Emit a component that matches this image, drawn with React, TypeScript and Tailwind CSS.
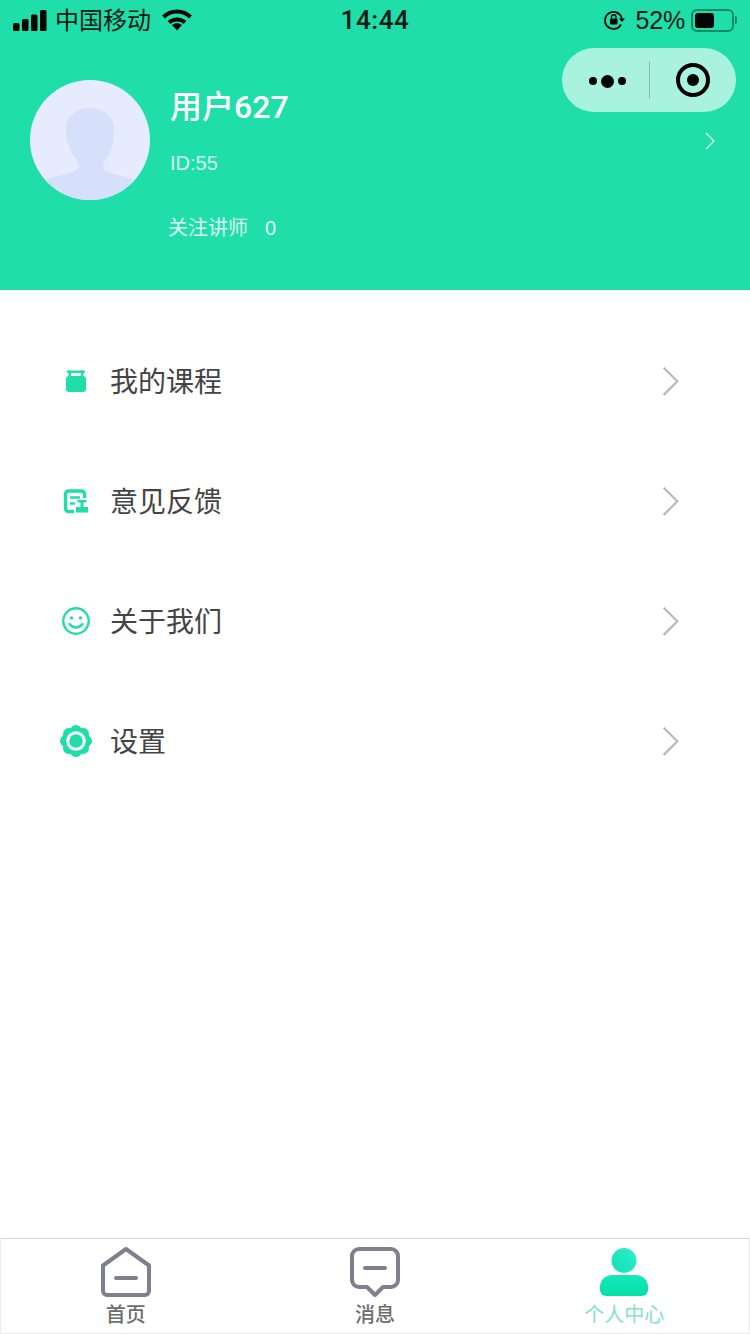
import type { ReactNode } from "react";

const GEAR_LOBES = [0, 45, 90, 135, 180, 225, 270, 315];

const MENU_ITEMS: { id: number; title: string; icon: ReactNode }[] = [
  {
    id: 1,
    title: "我的课程",
    icon: (
      <svg width="22" height="22" viewBox="0 0 22 22" fill="#1fdea9">
        <rect x="1" y="6" width="20" height="16" rx="3" />
        <rect x="2" y="0.500" width="18" height="2.600" rx="1" />
        <rect x="3.500" y="0.500" width="2.500" height="7" />
        <rect x="16" y="0.500" width="2.500" height="7" />
      </svg>
    ),
  },
  {
    id: 2,
    title: "意见反馈",
    icon: (
      <svg width="26" height="26" viewBox="0 0 26 26" fill="none" stroke="#1fdea9">
        <path d="M11 23.500H5A3.500 3.500 0 0 1 2.500 20V5.500A3.500 3.500 0 0 1 5 3h13a3.500 3.500 0 0 1 3.500 2.500V10" strokeWidth="3.400" />
        <path d="M7 9.500h10M7 15.500h5" strokeWidth="2.600" />
        <path d="M14.500 12h9v2.600h-3v4.400h4.500v5.500h-12V19h4.500v-4.400h-3z" fill="#1fdea9" stroke="none" />
      </svg>
    ),
  },
  {
    id: 3,
    title: "关于我们",
    icon: (
      <svg width="28" height="28" viewBox="0 0 28 28" fill="none" stroke="#1fdea9" strokeWidth="2.400">
        <circle cx="14" cy="14" r="12.700" />
        <circle cx="9.500" cy="11" r="1.800" fill="#1fdea9" stroke="none" />
        <circle cx="18.500" cy="11" r="1.800" fill="#1fdea9" stroke="none" />
        <path d="M7.500 17c3.500 4.600 9.500 4.600 13 0" strokeLinecap="round" />
      </svg>
    ),
  },
  {
    id: 4,
    title: "设置",
    icon: (
      <svg width="32" height="32" viewBox="0 0 32 32" fill="#1fdea9">
        <circle cx="16" cy="16" r="14" />
        {GEAR_LOBES.map((deg) => (
          <circle key={deg} cx="16" cy="5.500" r="5.500" transform={`rotate(${deg} 16 16)`} />
        ))}
        <circle cx="16" cy="16" r="9.800" fill="#fff" />
        <circle cx="16" cy="16" r="6.800" />
      </svg>
    ),
  },
];

const Chevron = ({ size, color, stroke }: { size: number; color: string; stroke: number }) => (
  <svg width={size} height={size * 1.8} viewBox="0 0 10 18" fill="none">
    <path d="M1 1l8 8-8 8" stroke={color} strokeWidth={stroke} />
  </svg>
);

const StatusBar = () => (
  <div className="flex h-10 items-center px-[13px] text-[#0a1a14]">
    <div className="flex flex-1 items-center">
      <svg width="34" height="21" viewBox="0 0 34 21" fill="#050505">
        <rect x="0" y="13" width="6.500" height="8" rx="1.500" />
        <rect x="9" y="9" width="6.500" height="12" rx="1.500" />
        <rect x="18" y="4.500" width="6.500" height="16.500" rx="1.500" />
        <rect x="27" y="0" width="6.500" height="21" rx="1.500" />
      </svg>
      <span className="mt-[2px] ml-2 text-2xl leading-none">中国移动</span>
      <svg className="ml-[11px]" width="30" height="22" viewBox="0 0 30 22" fill="none" stroke="#050505" strokeWidth="4">
        <path d="M1.500 8c7.500-7.500 19.500-7.500 27 0" />
        <path d="M7 13.500c4.500-4 11.500-4 16 0" />
        <path d="M15 21.500l-5-5.500c2.900-2.200 7.100-2.200 10 0z" fill="#050505" stroke="none" />
      </svg>
    </div>
    <span className="font-['Roboto'] text-[26px] leading-none font-medium tracking-[0.6px]">14:44</span>
    <div className="flex flex-1 items-center justify-end">
      <svg width="22" height="22" viewBox="0 0 22 22" fill="none" stroke="#050505" strokeWidth="1.800">
        <path d="M18.800 9.500A8.500 8.500 0 1 0 18 15.500" />
        <path d="M16 9.500h6l-3 3.500z" fill="#050505" stroke="none" />
        <rect x="7" y="9.500" width="7.500" height="6" rx="1" fill="#050505" stroke="none" />
        <path d="M8.500 9.500V8a2.200 2.200 0 0 1 4.500 0v1.500" strokeWidth="1.300" />
      </svg>
      <span className="ml-[11px] text-[25px] leading-none tracking-[-0.2px]">52%</span>
      <div className="ml-[6px] flex items-center">
        <div className="flex h-[23px] w-[43px] items-center rounded-[6px] border-2 border-[#118a68] p-[2px]">
          <div className="h-full w-[19px] rounded-[3px] bg-[#050505]" />
        </div>
        <div className="ml-[1px] h-2 w-[2px] rounded-r-sm bg-[#118a68]" />
      </div>
    </div>
  </div>
);

const Avatar = () => (
  <svg className="shrink-0" width="120" height="120" viewBox="0 0 120 120">
    <defs>
      <clipPath id="avatar-clip">
        <circle cx="60" cy="60" r="60" />
      </clipPath>
    </defs>
    <g clipPath="url(#avatar-clip)">
      <rect width="120" height="120" fill="#e6ecfd" />
      <path
        d="M60 28c14 0 24 9 24 21 0 11-1 19-6 27-4 6-6 10-4 13 4 4 16 6 26 9 6 2 10 5 14 9v13H6v-13c4-4 8-7 14-9 10-3 24-5 28-9 2-3 0-7-4-13-5-8-8-16-8-27 0-12 10-21 24-21z"
        fill="#d6e0fa"
      />
    </g>
  </svg>
);

const Capsule = () => (
  <div className="absolute top-12 right-[14px] flex h-16 w-[174px] items-center rounded-full bg-white/62">
    <div className="flex w-[87px] items-center justify-center gap-[4px] pt-[2px] pl-[3px]">
      <span className="h-2 w-2 rounded-full bg-black" />
      <span className="h-[13px] w-[13px] rounded-full bg-black" />
      <span className="h-2 w-2 rounded-full bg-black" />
    </div>
    <div className="h-[38px] w-px bg-[#8fb8aa]" />
    <div className="flex flex-1 items-center justify-center">
      <div className="flex h-[34px] w-[34px] items-center justify-center rounded-full border-4 border-black">
        <span className="h-3 w-3 rounded-full bg-black" />
      </div>
    </div>
  </div>
);

const Header = () => (
  <header className="relative h-[290px] shrink-0 bg-[#1fdea9]">
    <StatusBar />
    <Capsule />
    <div className="mt-10 flex pl-[30px]">
      <Avatar />
      <div className="ml-5 flex flex-col text-white">
        <h1 className="mt-[9px] font-['Roboto','Noto_Sans_CJK_SC',sans-serif] text-[32px] leading-9 font-medium">用户627</h1>
        <span className="mt-[26px] text-xl leading-6 text-white/80">ID:55</span>
        <span className="mt-[41px] -ml-[2px] text-xl leading-6 text-white/85">
          关注讲师<span className="ml-[17px]">0</span>
        </span>
      </div>
      <div className="mt-[52px] mr-[35px] ml-auto">
        <Chevron size={10} color="#e4fbf4" stroke={1.200} />
      </div>
    </div>
  </header>
);

const Menu = () => (
  <ul className="flex-1 bg-white pt-[31px]">
    {MENU_ITEMS.map((item) => (
      <li key={item.id} className="flex h-[120px] items-center pr-[71px] pl-[60px]">
        <span className="flex w-8 justify-center">{item.icon}</span>
        <span className="mt-1 ml-[18px] text-[28px] leading-none text-[#444]">{item.title}</span>
        <span className="ml-auto">
          <Chevron size={17} color="#b9b9b9" stroke={1.300} />
        </span>
      </li>
    ))}
  </ul>
);

const TabBar = () => (
  <nav className="grid h-24 shrink-0 grid-cols-3 border border-[#ececec] border-t-[#d6d6d6] bg-white pt-2">
    <div className="flex flex-col items-center">
      <svg width="50" height="50" viewBox="0 0 50 50" fill="none" stroke="#7f7f8e" strokeWidth="4" strokeLinejoin="round">
        <path d="M25 2L48 18.500V44a4 4 0 0 1-4 4H6a4 4 0 0 1-4-4V18.500z" />
        <path d="M15 31h20" strokeLinecap="round" />
      </svg>
      <span className="mt-[6px] text-xl leading-6 font-medium text-[#6e6e6e]">首页</span>
    </div>
    <div className="flex flex-col items-center">
      <svg width="50" height="50" viewBox="0 0 50 50" fill="none" stroke="#7f7f8e" strokeWidth="4" strokeLinejoin="round">
        <path d="M9 2h32a7 7 0 0 1 7 7v24a7 7 0 0 1-7 7h-8l-8 8-8-8H9a7 7 0 0 1-7-7V9a7 7 0 0 1 7-7z" />
        <path d="M15 21h20" strokeLinecap="round" />
      </svg>
      <span className="mt-[6px] text-xl leading-6 font-medium text-[#6e6e6e]">消息</span>
    </div>
    <div className="flex flex-col items-center">
      <svg width="50" height="50" viewBox="0 0 50 50">
        <defs>
          <linearGradient id="tab-head" x1="1" y1="0" x2="0" y2="1">
            <stop offset="0" stopColor="#2ff0cf" />
            <stop offset="1" stopColor="#0fe0b0" />
          </linearGradient>
          <linearGradient id="tab-body" x1="0" y1="0" x2="0" y2="1">
            <stop offset="0" stopColor="#14e8bc" />
            <stop offset="1" stopColor="#06e0a4" />
          </linearGradient>
        </defs>
        <circle cx="25" cy="13.500" r="12.500" fill="url(#tab-head)" />
        <path d="M13 28h24a12 12 0 0 1 12 12v3a6 6 0 0 1-6 6H7a6 6 0 0 1-6-6v-3a12 12 0 0 1 12-12z" fill="url(#tab-body)" />
      </svg>
      <span className="mt-[6px] text-xl leading-6 text-[#84e3c9]">个人中心</span>
    </div>
  </nav>
);

export default function App() {
  return (
    <div className="flex h-[1334px] w-[750px] flex-col bg-white font-['Liberation_Sans','Noto_Sans_CJK_SC',sans-serif]">
      <Header />
      <Menu />
      <TabBar />
    </div>
  );
}
